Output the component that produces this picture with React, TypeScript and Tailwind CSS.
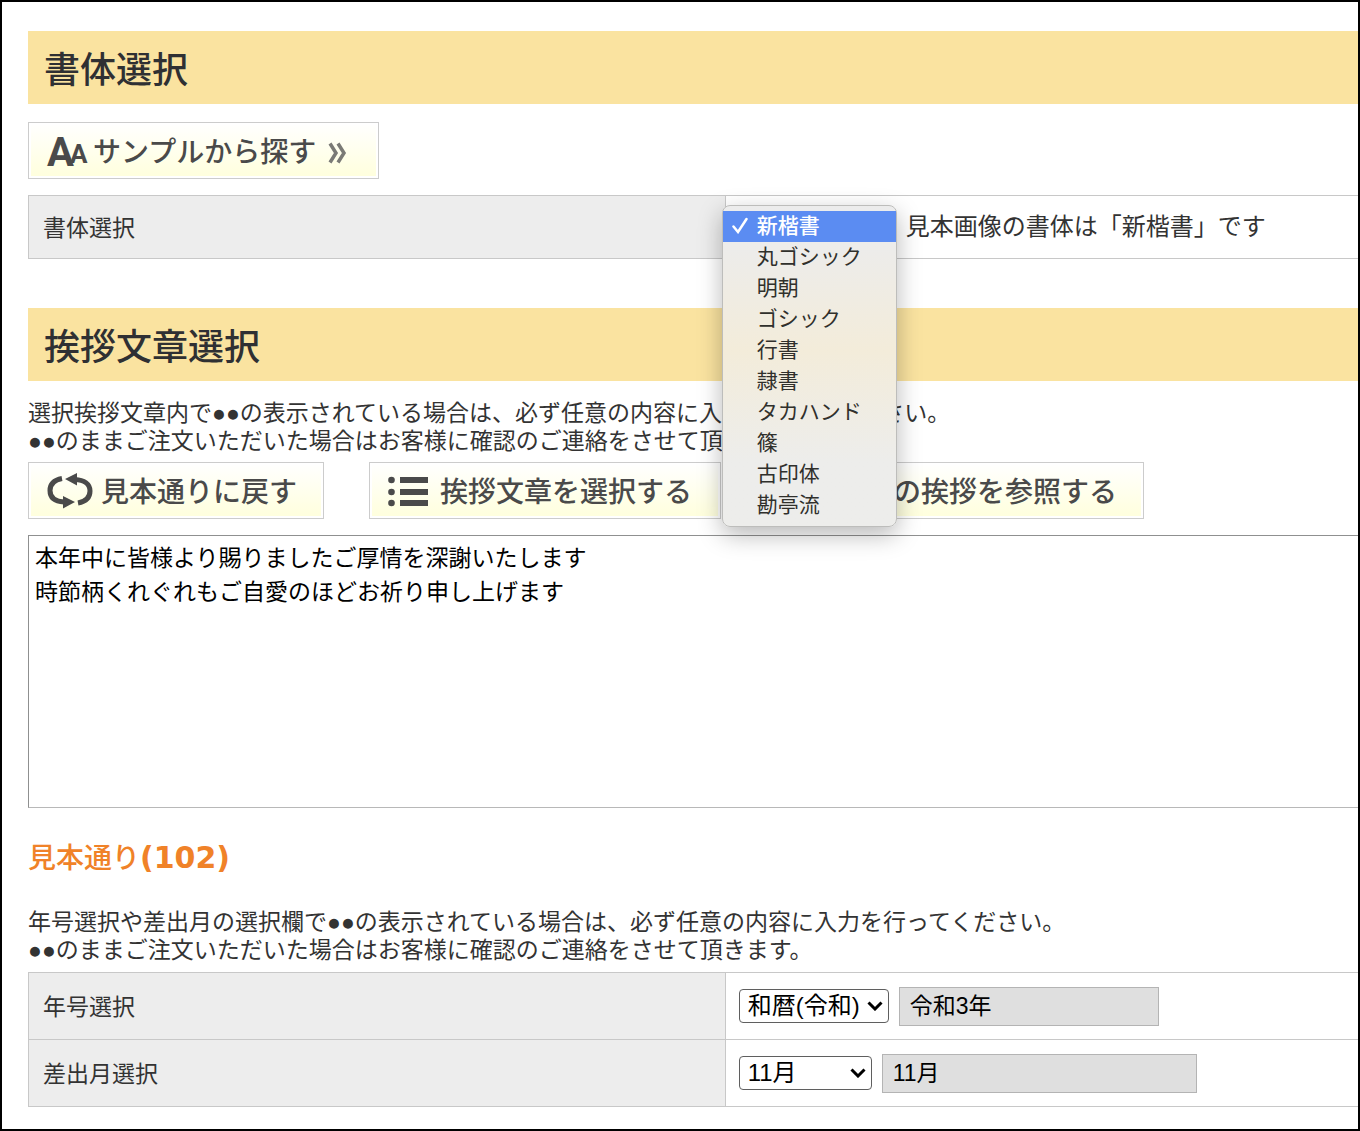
import React, { useState } from "react";

const fonts = ["新楷書", "丸ゴシック", "明朝", "ゴシック", "行書", "隷書", "タカハンド", "篠", "古印体", "勘亭流"];

const SectionTitle = ({ children }: { children: React.ReactNode }) => (
  <h2 className="flex h-[73px] items-center bg-[#fae3a0] pt-[7px] pl-4 text-[36px] leading-none font-medium text-[#2f3033]">
    {children}
  </h2>
);

const ImageButton = ({ className = "", children }: { className?: string; children: React.ReactNode }) => (
  <button
    type="button"
    className={`flex h-[57px] shrink-0 items-center border border-[#cccccc] bg-linear-to-b from-white to-[#ffffdc] pt-[5px] pl-[18px] text-[28px] leading-none font-medium whitespace-nowrap text-[#4a4a4a] inset-ring-2 inset-ring-white ${className}`}
  >
    {children}
  </button>
);

const ReloadIcon = () => (
  <svg width="46" height="36" viewBox="0 0 46 36" fill="none" className="mr-2 mb-1" aria-hidden="true">
    <path d="M15 5.500C7 7 3 11.500 3 17.500c0 7 5 11 14 11.500" stroke="#4a4a4a" strokeWidth="5" />
    <path d="M31 30c8-1.500 12-6 12-12C43 11 37 7 28 6.500" stroke="#4a4a4a" strokeWidth="5" />
    <path d="M18 6 30 0v12.500zM28 29 16 23v12.500z" fill="#4a4a4a" />
  </svg>
);

const ListIcon = () => (
  <svg width="40" height="32" viewBox="0 0 40 32" fill="#4a4a4a" className="mr-3 mb-0.5" aria-hidden="true">
    <circle cx="3.500" cy="4" r="3.300" />
    <circle cx="3.500" cy="16" r="3.300" />
    <circle cx="3.500" cy="27" r="3.300" />
    <path d="M12 1h28v6H12zM12 13h28v6H12zM12 24h28v6H12z" />
  </svg>
);

const BookIcon = () => (
  <svg width="44" height="32" viewBox="0 0 44 32" fill="none" stroke="#4a4a4a" strokeWidth="4" className="mr-2" aria-hidden="true">
    <path d="M22 7C17 3 10 3 3 5v22c7-2 14-2 19 2 5-4 12-4 19-2V5c-7-2-14-2-19 2zv22" />
  </svg>
);

const DoubleChevron = () => (
  <svg width="20" height="22" viewBox="0 0 20 22" fill="none" stroke="#7a7a76" strokeWidth="3.500" className="ml-3" aria-hidden="true">
    <path d="M2 1.500 8 11 2 20.500M10 1.500l6 9.500-6 9.500" />
  </svg>
);

const SelectBox = ({ id, options, className = "" }: { id: string; options: string[]; className?: string }) => (
  <div className={`relative shrink-0 ${className}`}>
    <select
      id={id}
      className="block h-[34px] w-full appearance-none rounded-[4px] border border-[#5f5f5f] bg-white pl-2 text-[24px] leading-8 text-black"
    >
      {options.map((o) => (
        <option key={o}>{o}</option>
      ))}
    </select>
    <svg
      width="16"
      height="10"
      viewBox="0 0 16 10"
      fill="none"
      stroke="#000"
      strokeWidth="3"
      className="pointer-events-none absolute top-3 right-1.5"
      aria-hidden="true"
    >
      <path d="M1.500 1.500 8 8l6.500-6.500" />
    </svg>
  </div>
);

const FontMenu = ({ value, onChange }: { value: string; onChange: (v: string) => void }) => (
  <ul
    role="listbox"
    aria-label="書体選択"
    className="absolute -top-[5px] -left-[17px] z-10 w-[175px] rounded-lg border border-[#bdbdbb] bg-linear-to-b from-[#ececec] from-10% via-[#f3ecda] via-45% to-[#ededeb] to-80% py-[5px] shadow-[0_8px_24px_rgba(0,0,0,0.28)]"
  >
    {fonts.map((f) => (
      <li
        key={f}
        role="option"
        aria-selected={f === value}
        onClick={() => onChange(f)}
        className={`flex h-[31px] cursor-default items-center pb-0.5 text-[21px] leading-none ${
          f === value ? "bg-[#5b8cf2] font-medium text-white" : "text-[#30302c]"
        }`}
      >
        <span className="flex w-[34px] shrink-0 justify-center">
          {f === value && (
            <svg width="16" height="17" viewBox="0 0 16 17" fill="none" stroke="#fff" strokeWidth="2.500" strokeLinecap="round" aria-hidden="true">
              <path d="M1.500 9.500 6 15 14.500 2" />
            </svg>
          )}
        </span>
        {f}
      </li>
    ))}
  </ul>
);

const labelCell = "w-[52.4%] border border-[#c8c8c8] bg-[#ededed] pt-[3px] pl-3.5 text-left align-middle text-[23px] font-normal text-[#333333]";
const valueCell = "border border-r-0 border-[#c8c8c8] pl-[13px] align-middle";
const readonlyInput = "h-[39px] shrink-0 border border-[#b4b4b4] bg-[#dfdfdf] pb-1 pl-2.5 text-[23px] text-black";

export default function App() {
  const [font, setFont] = useState("新楷書");

  return (
    <main className="min-h-screen overflow-hidden border-2 border-black bg-white pt-[29px] pb-5 pl-[26px] font-['Liberation_Sans','Noto_Sans_CJK_JP',sans-serif] text-[#333333]">
      <SectionTitle>書体選択</SectionTitle>
      <ImageButton className="mt-[18px] w-[351px]">
        <span className="mr-1.5 flex w-[40px] items-end font-['Roboto',sans-serif] font-bold" aria-hidden="true">
          <span className="text-[40px]">A</span>
          <span className="-ml-1 pb-1.5 text-[26px]">A</span>
        </span>
        サンプルから探す
        <DoubleChevron />
      </ImageButton>

      <table className="mt-4 w-full border-collapse">
        <tbody>
          <tr className="h-[63px]">
            <th scope="row" className={labelCell}>
              <label htmlFor="font">書体選択</label>
            </th>
            <td className={valueCell}>
              <div className="flex items-center">
                <div className="relative w-[157px] shrink-0">
                  <select
                    id="font"
                    value={font}
                    onChange={(e) => setFont(e.target.value)}
                    className="block h-[34px] w-full rounded-[4px] border border-[#5f5f5f] bg-white text-[23px]"
                  >
                    {fonts.map((f) => (
                      <option key={f}>{f}</option>
                    ))}
                  </select>
                  <FontMenu value={font} onChange={setFont} />
                </div>
                <span className="ml-2.5 text-[24px] leading-8 whitespace-nowrap">見本画像の書体は「新楷書」です</span>
              </div>
            </td>
          </tr>
        </tbody>
      </table>

      <div className="mt-[49px]">
        <SectionTitle>挨拶文章選択</SectionTitle>
      </div>
      <p className="mt-[18px] text-[23px] leading-7">
        選択挨拶文章内で●●の表示されている場合は、必ず任意の内容に入力を行ってください。
        <br />
        ●●のままご注文いただいた場合はお客様に確認のご連絡をさせて頂きます。
      </p>
      <div className="mt-[7px] flex gap-[45px]">
        <ImageButton className="w-[296px]">
          <ReloadIcon />
          見本通りに戻す
        </ImageButton>
        <ImageButton className="w-[352px]">
          <ListIcon />
          挨拶文章を選択する
        </ImageButton>
        <ImageButton className="w-[378px]">
          <BookIcon />
          過去の挨拶を参照する
        </ImageButton>
      </div>
      <textarea
        aria-label="挨拶文章"
        className="mt-4 block h-[273px] w-full resize-none border border-r-0 border-[#8f9090] border-b-[#b8b8b8] px-1.5 py-[5px] text-[23px] leading-[34px] text-black"
        defaultValue={"本年中に皆様より賜りましたご厚情を深謝いたします\n時節柄くれぐれもご自愛のほどお祈り申し上げます"}
      />

      <h3 className="mt-8 text-[28px] leading-9 font-medium text-[#f08228]">
        見本通り<span className="font-['DejaVu_Sans',sans-serif] text-[30px] font-bold">(102)</span>
      </h3>
      <p className="mt-[31px] text-[23px] leading-7">
        年号選択や差出月の選択欄で●●の表示されている場合は、必ず任意の内容に入力を行ってください。
        <br />
        ●●のままご注文いただいた場合はお客様に確認のご連絡をさせて頂きます。
      </p>
      <table className="mt-2 w-full border-collapse">
        <tbody>
          <tr className="h-[67px]">
            <th scope="row" className={labelCell}>
              <label htmlFor="era">年号選択</label>
            </th>
            <td className={valueCell}>
              <div className="flex items-center gap-2.5">
                <SelectBox id="era" options={["和暦(令和)", "西暦"]} className="w-[150px]" />
                <input aria-label="年号" readOnly value="令和3年" className={`w-[260px] ${readonlyInput}`} />
              </div>
            </td>
          </tr>
          <tr className="h-[67px]">
            <th scope="row" className={labelCell}>
              <label htmlFor="month">差出月選択</label>
            </th>
            <td className={valueCell}>
              <div className="flex items-center gap-2.5">
                <SelectBox id="month" options={["11月", "12月"]} className="w-[133px]" />
                <input aria-label="差出月" readOnly value="11月" className={`w-[315px] ${readonlyInput}`} />
              </div>
            </td>
          </tr>
        </tbody>
      </table>
    </main>
  );
}
